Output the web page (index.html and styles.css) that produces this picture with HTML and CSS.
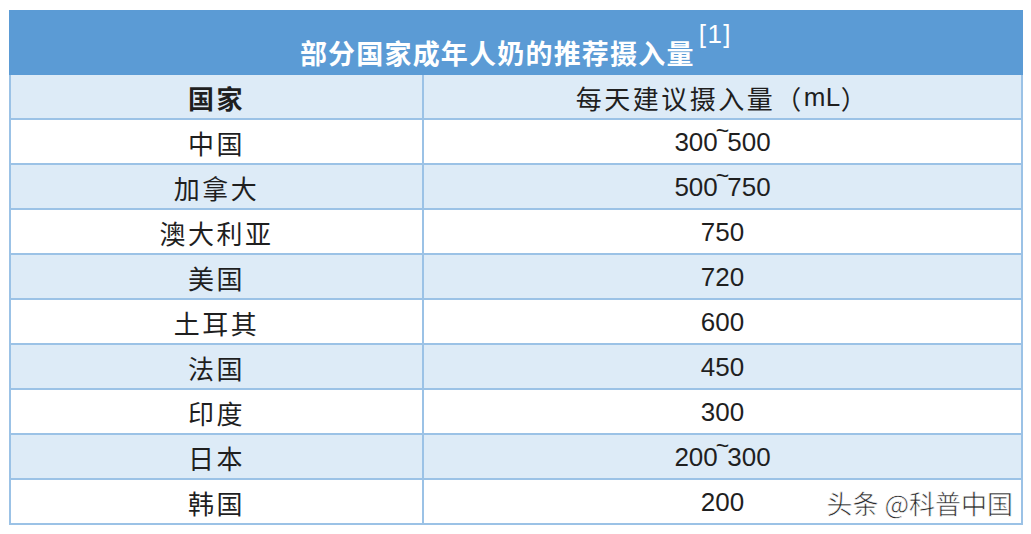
FILE: index.html
```html
<!DOCTYPE html>
<html lang="zh-CN">
<head>
<meta charset="utf-8">
<title>部分国家成年人奶的推荐摄入量</title>
<link rel="stylesheet" href="styles.css">
</head>
<body>
<div class="sheet">
  <div class="title"><span class="title-text">部分国家成年人奶的推荐摄入量</span><span class="ref">[1]</span></div>
  <div class="grid">
    <div class="cell head cjk">国家</div>
    <div class="cell head cjk">每天建议摄入量（<span class="latin">mL</span>）</div>

    <div class="cell cjk">中国</div>
    <div class="cell num">300<span class="tilde">~</span>500</div>

    <div class="cell alt cjk">加拿大</div>
    <div class="cell alt num">500<span class="tilde">~</span>750</div>

    <div class="cell cjk">澳大利亚</div>
    <div class="cell num">750</div>

    <div class="cell alt cjk">美国</div>
    <div class="cell alt num">720</div>

    <div class="cell cjk">土耳其</div>
    <div class="cell num">600</div>

    <div class="cell alt cjk">法国</div>
    <div class="cell alt num">450</div>

    <div class="cell cjk">印度</div>
    <div class="cell num">300</div>

    <div class="cell alt cjk">日本</div>
    <div class="cell alt num">200<span class="tilde">~</span>300</div>

    <div class="cell cjk">韩国</div>
    <div class="cell num">200</div>
  </div>
  <div class="watermark">头条 @科普中国</div>
</div>
</body>
</html>
```

FILE: styles.css
```css
html, body {
  margin: 0;
  padding: 0;
  background: #ffffff;
}

body {
  font-family: "Liberation Sans", "Noto Sans CJK SC", sans-serif;
  color: #1f1f1f;
}

.sheet {
  position: relative;
  width: 1014px;
  margin: 10px 0 0 9px;
}

.title {
  height: 65px;
  box-sizing: border-box;
  padding-bottom: 9px;
  background: #5b9bd5;
  color: #ffffff;
  display: flex;
  justify-content: center;
  align-items: flex-end;
  white-space: nowrap;
}

.title-text {
  font-family: "Noto Sans CJK SC", sans-serif;
  font-weight: 700;
  font-size: 27px;
  line-height: 27px;
  letter-spacing: 1.2px;
}

.ref {
  align-self: flex-start;
  margin-top: 11px;
  margin-left: 4px;
  font-family: "Liberation Sans", sans-serif;
  font-size: 26px;
  line-height: 26px;
  font-weight: 400;
  letter-spacing: 1.5px;
}

.grid {
  display: grid;
  grid-template-columns: 411px 597px;
  grid-auto-rows: 43px;
  gap: 2px;
  padding: 0 2px 2px 2px;
  background: #9bc2e6;
}

.cell {
  background: #ffffff;
  display: flex;
  align-items: center;
  justify-content: center;
  white-space: nowrap;
}

.cell.head,
.cell.alt {
  background: #ddebf7;
}

.cjk {
  font-family: "Noto Sans CJK SC", sans-serif;
  font-size: 26px;
  letter-spacing: 2.5px;
  padding-top: 1px;
}

.cell.head.cjk:first-child {
  font-weight: 700;
}

.latin {
  font-family: "Liberation Sans", sans-serif;
  letter-spacing: 0.5px;
}

.num {
  font-family: "Liberation Sans", sans-serif;
  font-size: 26px;
  padding-top: 2px;
}

.tilde {
  font-size: 23px;
  position: relative;
  top: -11px;
  margin: 0 -2px;
}

.watermark {
  position: absolute;
  right: 10px;
  bottom: 4px;
  font-family: "Noto Sans CJK SC", sans-serif;
  font-size: 26px;
  color: #2a2a2a;
  -webkit-text-stroke: 0.6px #ffffff;
  text-shadow: 0 0 1px #ffffff, 1px 1px 0 #ffffff;
  white-space: nowrap;
}
```
